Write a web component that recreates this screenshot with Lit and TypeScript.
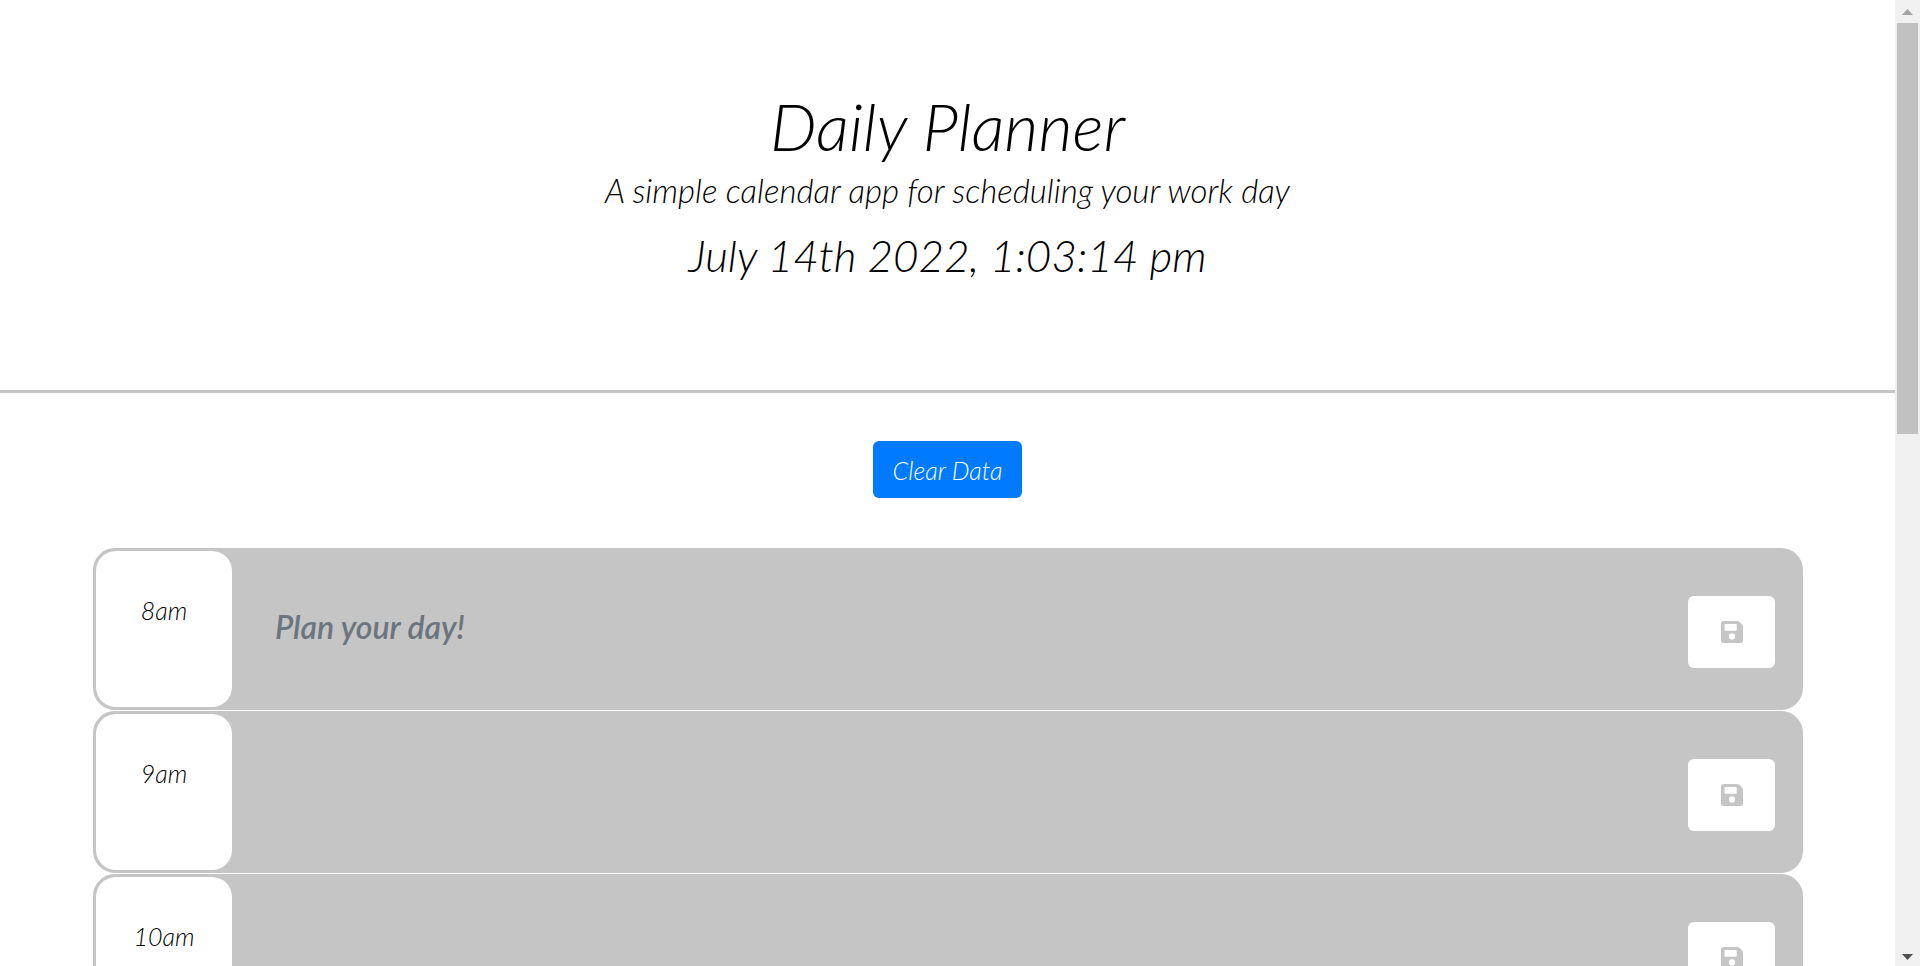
import { LitElement, html, css } from "lit";
import { customElement, property, state } from "lit/decorators.js";

@customElement("time-block")
class TimeBlock extends LitElement {
  @property() hour = "";
  @property() hint = "";

  static styles = css`
    :host {
      display: flex;
      align-items: flex-start;
      box-sizing: border-box;
      height: 162px;
      border: 3px solid #c5c5c5;
      border-radius: 22px;
      background: #c5c5c5;
    }
    .hour {
      box-sizing: border-box;
      flex: none;
      width: 136px;
      height: 156px;
      padding-top: 41px;
      border-radius: 20px;
      background: #fff;
      font-size: 25px;
      line-height: 36px;
      text-align: center;
    }
    .plan {
      box-sizing: border-box;
      flex: 1;
      min-width: 0;
      height: 156px;
      padding: 52px 43px 0;
      border: 0;
      outline: 0;
      resize: none;
      background: transparent;
      color: #000;
      font: italic 600 32px/48px Lato, "Open Sans", sans-serif;
      overflow: hidden;
    }
    .plan::placeholder {
      color: #6c757d;
      opacity: 1;
    }
    .save {
      display: flex;
      flex: none;
      align-items: center;
      justify-content: center;
      width: 87px;
      height: 72px;
      margin: 45px 25px 0 0;
      padding: 0;
      border: 0;
      border-radius: 6px;
      background: #fff;
      color: #c5c5c5;
      cursor: pointer;
    }
  `;

  render() {
    return html`
      <label class="hour" for="plan">${this.hour}</label>
      <textarea class="plan" id="plan" aria-label=${this.hour} placeholder=${this.hint}></textarea>
      <button class="save" type="button" aria-label="Save">
        <svg width="22" height="22" viewBox="0 0 22 22" aria-hidden="true">
          <path
            fill="currentColor"
            fill-rule="evenodd"
            d="M3 0H16.5Q17.5 0 18.2.7L21.3 3.8Q22 4.500 22 5.500V19.500Q22 22 19.500 22H2.500Q0 22 0 19.500V2.500Q0 0 3 0ZM4 3Q3.500 3 3.500 3.500V9Q3.500 9.700 4 9.700H15.200Q15.700 9.700 15.700 9V3.500Q15.700 3 15.200 3ZM11 12.300A3.100 3.100 0 1 0 11 18.500A3.100 3.100 0 1 0 11 12.300Z"
          ></path>
        </svg>
      </button>
    `;
  }
}

@customElement("app-root")
class AppRoot extends LitElement {
  @state() hours = ["8am", "9am", "10am", "11am", "12pm", "1pm", "2pm", "3pm", "4pm", "5pm"];

  static styles = css`
    :host {
      display: flex;
      height: 100vh;
      background: #fff;
      color: #000;
      font-family: Lato, "Open Sans", sans-serif;
      font-style: italic;
      font-weight: 300;
    }
    .page {
      flex: 1;
      min-width: 0;
      overflow-y: auto;
      scrollbar-width: none;
    }
    .header {
      padding: 86px 24px 102px;
      border-bottom: 3px solid #c5c5c5;
      text-align: center;
    }
    .title,
    .lead,
    .today {
      margin: 0;
      font-weight: 300;
    }
    .title {
      font-size: 66px;
      line-height: 80px;
    }
    .lead {
      font-size: 33px;
      line-height: 48px;
    }
    .today {
      margin-top: 8px;
      font-size: 44px;
      line-height: 66px;
    }
    .actions {
      display: flex;
      justify-content: center;
      padding: 48px 0 50px;
    }
    .clear {
      height: 57px;
      padding: 0 20px;
      border: 0;
      border-radius: 6px;
      background: #007bff;
      color: #fff;
      font: inherit;
      font-size: 25px;
      cursor: pointer;
    }
    .blocks {
      display: flex;
      flex-direction: column;
      gap: 1px;
      padding: 0 92px 48px 93px;
    }
    .scrollbar {
      display: flex;
      flex: none;
      flex-direction: column;
      width: 25px;
      background: #f0f0f0;
    }
    .arrow {
      display: flex;
      flex: none;
      align-items: center;
      justify-content: center;
      height: 23px;
      color: #a3a3a3;
    }
    .arrow.down {
      height: 18px;
      color: #505050;
    }
    .track {
      flex: 1;
      padding: 0 2px;
    }
    .thumb {
      height: 44.4%;
      background: #c1c1c1;
    }
  `;

  render() {
    return html`
      <main class="page">
        <header class="header">
          <h1 class="title">Daily Planner</h1>
          <p class="lead">A simple calendar app for scheduling your work day</p>
          <p class="today">July 14th 2022, 1:03:14 pm</p>
        </header>
        <div class="actions">
          <button class="clear" type="button">Clear Data</button>
        </div>
        <section class="blocks">
          ${this.hours.map(
            (hour, i) => html`<time-block .hour=${hour} .hint=${i === 0 ? "Plan your day!" : ""}></time-block>`
          )}
        </section>
      </main>
      <div class="scrollbar" aria-hidden="true">
        <div class="arrow">
          <svg width="11" height="6" viewBox="0 0 11 6"><path fill="currentColor" d="M0 6L5.500 0L11 6Z"></path></svg>
        </div>
        <div class="track"><div class="thumb"></div></div>
        <div class="arrow down">
          <svg width="11" height="6" viewBox="0 0 11 6"><path fill="currentColor" d="M0 0L5.500 6L11 0Z"></path></svg>
        </div>
      </div>
    `;
  }
}
